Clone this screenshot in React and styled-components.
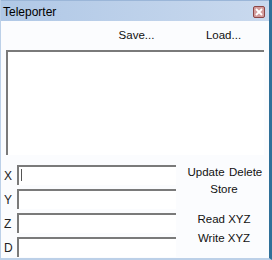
import React from 'react';
import styled, { createGlobalStyle } from 'styled-components';

const GlobalStyle = createGlobalStyle`
  body {
    margin: 0;
    background: #ffffff;
  }
  * {
    box-sizing: border-box;
  }
`;

const Window = styled.div`
  width: 272px;
  height: 260px;
  display: flex;
  flex-direction: column;
  background-color: #fbfcfe;
  border-left: 1px solid #bcd0e8;
  border-right: 3px solid #2f7099;
  border-bottom: 2px solid #bcd0e8;
  font-family: "Liberation Sans", Arial, sans-serif;
  font-size: 12px;
  color: #111;
`;

const TitleBar = styled.div`
  height: 21px;
  flex: none;
  display: flex;
  align-items: center;
  justify-content: space-between;
  padding: 2px 4px 0 2px;
  background: linear-gradient(to right, #b0c8e6, #c9d9ee);
  border-top: 1px solid #9bb6d8;
`;

const Title = styled.span`
  font-size: 12px;
  color: #000;
`;

const CloseButton = styled.button`
  width: 12px;
  height: 12px;
  padding: 0;
  display: flex;
  align-items: center;
  justify-content: center;
  background-color: #d39c9c;
  border: 1px solid #8c4545;
  border-radius: 2px;
`;

const Body = styled.div`
  flex: 1;
  display: flex;
  flex-direction: column;
`;

const FileBar = styled.div`
  height: 29px;
  display: flex;
  justify-content: flex-end;
  align-items: center;
  padding: 0 2px 2px 0;
`;

const FlatButton = styled.button`
  width: ${p => p.$width || 87}px;
  padding: 0;
  border: none;
  background: none;
  font-family: inherit;
  font-size: 11.5px;
  color: #111;
  text-align: center;
`;

const ListBox = styled.div`
  margin-left: 5px;
  width: 258px;
  height: 105px;
  background-color: #ffffff;
  border-top: 2px solid #7a7a7a;
  border-left: 2px solid #7a7a7a;
`;

const Lower = styled.div`
  margin-top: 10px;
  display: flex;
`;

const Fields = styled.div`
  display: flex;
  flex-direction: column;
  gap: 4px;
`;

const FieldRow = styled.div`
  height: 20px;
  display: flex;
  align-items: center;
`;

const Label = styled.span`
  width: 16px;
  padding-left: 3px;
  padding-top: 2px;
  font-size: 12px;
  color: #222;
`;

const InputWrap = styled.div`
  position: relative;
  width: 159px;
  height: 20px;
`;

const Input = styled.input`
  width: 100%;
  height: 100%;
  margin: 0;
  padding: 0 3px;
  background-color: #fff;
  border: none;
  border-top: 2px solid #7a7a7a;
  border-left: 2px solid #7a7a7a;
  outline: none;
  font-family: inherit;
  font-size: 12px;
`;

const Caret = styled.span`
  position: absolute;
  left: 4px;
  top: 4px;
  width: 1px;
  height: 12px;
  background-color: #000;
  border-left: 1px solid #555;
`;

const Actions = styled.div`
  width: 88px;
  margin-left: 4px;
  display: flex;
  flex-direction: column;
  align-items: center;
`;

const ActionRow = styled.div`
  display: flex;
  gap: 4px;
  margin-top: ${p => p.$top || 0}px;
`;

function App() {
  return (
    <>
      <GlobalStyle />
      <Window>
        <TitleBar>
          <Title>Teleporter</Title>
          <CloseButton aria-label="Close">
            <svg width="8" height="8" viewBox="0 0 8 8">
              <path d="M1 1 L7 7 M7 1 L1 7" stroke="#fff" strokeWidth="1.8" />
            </svg>
          </CloseButton>
        </TitleBar>
        <Body>
          <FileBar>
            <FlatButton>Save...</FlatButton>
            <FlatButton>Load...</FlatButton>
          </FileBar>
          <ListBox />
          <Lower>
            <Fields>
              {['X', 'Y', 'Z', 'D'].map((axis, i) => (
                <FieldRow key={axis}>
                  <Label>{axis}</Label>
                  <InputWrap>
                    <Input readOnly />
                    {i === 0 && <Caret />}
                  </InputWrap>
                </FieldRow>
              ))}
            </Fields>
            <Actions>
              <ActionRow $top={1}>
                <FlatButton $width={38}>Update</FlatButton>
                <FlatButton $width={32}>Delete</FlatButton>
              </ActionRow>
              <ActionRow $top={5}>
                <FlatButton $width={40}>Store</FlatButton>
              </ActionRow>
              <ActionRow $top={18}>
                <FlatButton $width={60}>Read XYZ</FlatButton>
              </ActionRow>
              <ActionRow $top={7}>
                <FlatButton $width={60}>Write XYZ</FlatButton>
              </ActionRow>
            </Actions>
          </Lower>
        </Body>
      </Window>
    </>
  );
}

export default App;
